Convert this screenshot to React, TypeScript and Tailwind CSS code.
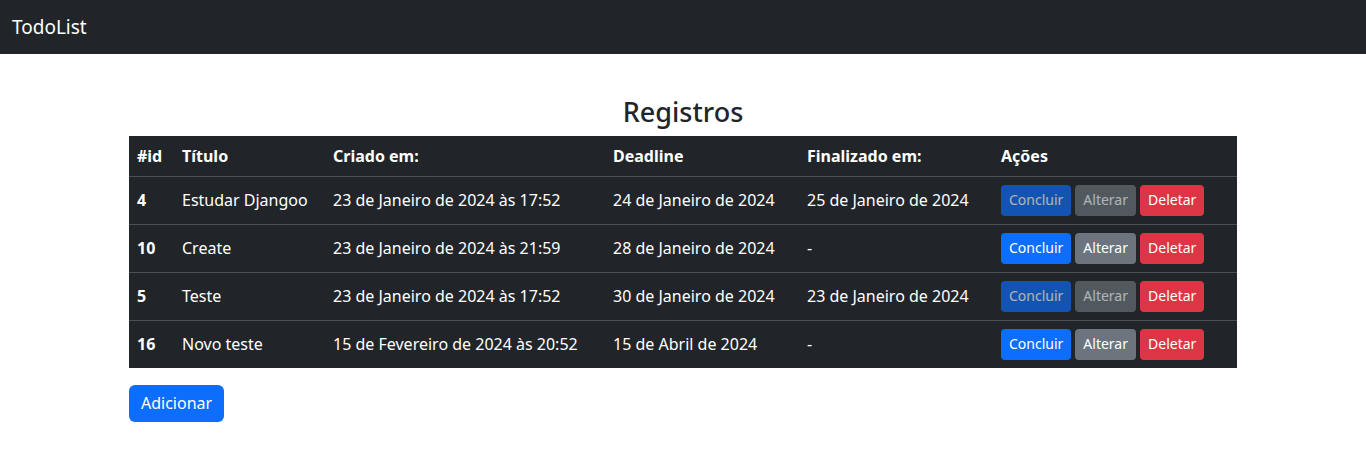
const rows = [
  { id: 4, title: 'Estudar Djangoo', created: '23 de Janeiro de 2024 às 17:52', deadline: '24 de Janeiro de 2024', done: '25 de Janeiro de 2024' },
  { id: 10, title: 'Create', created: '23 de Janeiro de 2024 às 21:59', deadline: '28 de Janeiro de 2024', done: null },
  { id: 5, title: 'Teste', created: '23 de Janeiro de 2024 às 17:52', deadline: '30 de Janeiro de 2024', done: '23 de Janeiro de 2024' },
  { id: 16, title: 'Novo teste', created: '15 de Fevereiro de 2024 às 20:52', deadline: '15 de Abril de 2024', done: null },
]

function Actions({ finished }: { finished: boolean }) {
  const off = finished ? 'opacity-65 pointer-events-none' : ''
  return (
    <div className="flex gap-1">
      <button className={`h-[31px] px-2 rounded-[4px] bg-[#0d6efd] text-white text-sm ${off}`}>Concluir</button>
      <button className={`h-[31px] px-2 rounded-[4px] bg-[#6c757d] text-white text-sm ${off}`}>Alterar</button>
      <button className="h-[31px] px-2 rounded-[4px] bg-[#dc3545] text-white text-sm">Deletar</button>
    </div>
  )
}

export default function App() {
  return (
    <div className="min-h-screen bg-white text-[#212529] font-['Noto_Sans',sans-serif]">
      <nav className="h-[54px] bg-[#212529] flex items-center px-3">
        <span className="text-white text-[19px]">TodoList</span>
      </nav>

      <main className="w-[1108px] mx-auto pt-[42px]">
        <h3 className="text-center text-[27px] font-medium leading-[1.2] mb-[8px]">Registros</h3>

        <table className="w-full bg-[#212529] text-white text-left border-collapse">
          <thead>
            <tr className="border-b border-[#4b4f52] h-[40px]">
              <th className="w-[45px] px-2 font-bold">#id</th>
              <th className="w-[151px] px-2 font-bold">Título</th>
              <th className="w-[280px] px-2 font-bold">Criado em:</th>
              <th className="w-[194px] px-2 font-bold">Deadline</th>
              <th className="w-[194px] px-2 font-bold">Finalizado em:</th>
              <th className="px-2 font-bold">Ações</th>
            </tr>
          </thead>
          <tbody>
            {rows.map((r, i) => (
              <tr key={r.id} className={i < rows.length - 1 ? 'border-b border-[#4b4f52]' : ''}>
                <td className="p-2 align-top font-bold leading-[31px]">{r.id}</td>
                <td className="p-2 align-top leading-[31px]">{r.title}</td>
                <td className="p-2 align-top leading-[31px]">{r.created}</td>
                <td className="p-2 align-top leading-[31px]">{r.deadline}</td>
                <td className="p-2 align-top leading-[31px]">{r.done ?? '-'}</td>
                <td className="p-2 align-top">
                  <Actions finished={r.done !== null} />
                </td>
              </tr>
            ))}
          </tbody>
        </table>

        <button className="mt-[17px] h-[37px] px-3 rounded-[6px] bg-[#0d6efd] text-white">Adicionar</button>
      </main>
    </div>
  )
}
